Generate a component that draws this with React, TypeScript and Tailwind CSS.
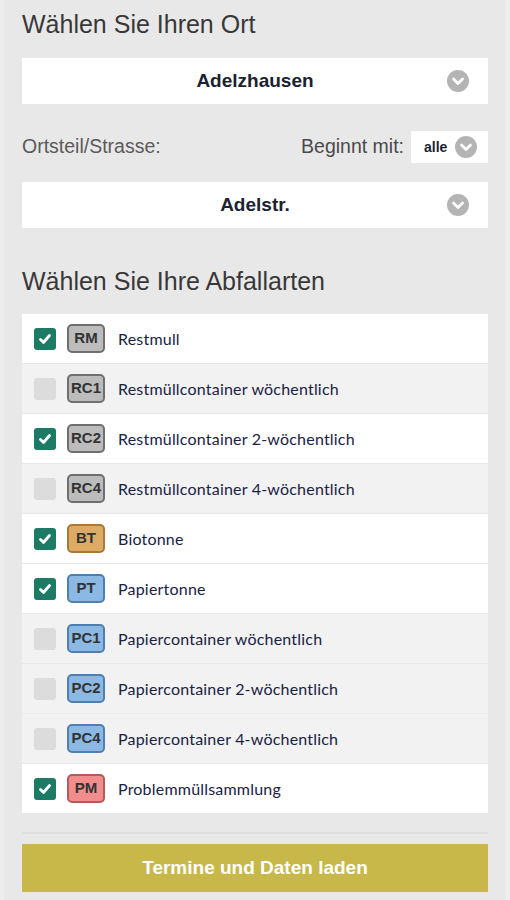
import React, { useState } from 'react';

interface Waste {
  code: string;
  label: string;
  checked: boolean;
  tone: 'gray' | 'tan' | 'blue' | 'red';
}

const initial: Waste[] = [
  { code: 'RM', label: 'Restmull', checked: true, tone: 'gray' },
  { code: 'RC1', label: 'Restmüllcontainer wöchentlich', checked: false, tone: 'gray' },
  { code: 'RC2', label: 'Restmüllcontainer 2-wöchentlich', checked: true, tone: 'gray' },
  { code: 'RC4', label: 'Restmüllcontainer 4-wöchentlich', checked: false, tone: 'gray' },
  { code: 'BT', label: 'Biotonne', checked: true, tone: 'tan' },
  { code: 'PT', label: 'Papiertonne', checked: true, tone: 'blue' },
  { code: 'PC1', label: 'Papiercontainer wöchentlich', checked: false, tone: 'blue' },
  { code: 'PC2', label: 'Papiercontainer 2-wöchentlich', checked: false, tone: 'blue' },
  { code: 'PC4', label: 'Papiercontainer 4-wöchentlich', checked: false, tone: 'blue' },
  { code: 'PM', label: 'Problemmüllsammlung', checked: true, tone: 'red' },
];

const badgeTone = {
  gray: 'bg-[#bcbcbc] border-[#6f6f6f]',
  tan: 'bg-[#dcab66] border-[#a9793a]',
  blue: 'bg-[#8cb9e4] border-[#4f7fae]',
  red: 'bg-[#f28d8d] border-[#b45a5a]',
};

const Chevron: React.FC = () => (
  <svg width="22" height="22" viewBox="0 0 22 22">
    <circle cx="11" cy="11" r="11" fill="#b4b4b4" />
    <path d="M6.5 9l4.5 4.5L15.5 9" fill="none" stroke="#fff" strokeWidth={2.8} strokeLinecap="round" strokeLinejoin="round" />
  </svg>
);

const App: React.FC = () => {
  const [items, setItems] = useState<Waste[]>(initial);

  const toggle = (code: string) =>
    setItems(items.map(i => (i.code === code ? { ...i, checked: !i.checked } : i)));

  return (
    <div className="min-h-[900px] bg-[#efeeef] font-['Liberation_Sans',Arial,sans-serif]">
      <div className="ml-[4px] w-[502px] min-h-[900px] bg-[#e9e8e9] px-[18px] pt-[9px]">
        <h1 className="text-[25px] leading-[30px] text-[#383838]">Wählen Sie Ihren Ort</h1>

        <button className="mt-[19px] w-full h-[46px] bg-white flex items-center relative">
          <span className="flex-1 text-center text-[19px] font-bold text-[#1b2230]">Adelzhausen</span>
          <span className="absolute right-[19px] top-[12px]"><Chevron /></span>
        </button>

        <div className="mt-[27px] flex items-center h-[32px]">
          <span className="text-[19.5px] text-[#5a5a5a]">Ortsteil/Strasse:</span>
          <span className="ml-auto text-[19.5px] text-[#4a4a4a]">Beginnt mit:</span>
          <div className="ml-[7px] w-[77px] h-[32px] bg-white flex items-center pl-[13px] gap-[8px]">
            <span className="text-[14px] font-bold text-[#1b2230]">alle</span>
            <Chevron />
          </div>
        </div>

        <button className="mt-[19px] w-full h-[46px] bg-white flex items-center relative">
          <span className="flex-1 text-center text-[19px] font-bold text-[#1b2230]">Adelstr.</span>
          <span className="absolute right-[19px] top-[12px]"><Chevron /></span>
        </button>

        <h2 className="mt-[38px] text-[25px] leading-[30px] text-[#383838]">Wählen Sie Ihre Abfallarten</h2>

        <ul className="mt-[18px]">
          {items.map(item => (
            <li
              key={item.code}
              onClick={() => toggle(item.code)}
              className={`h-[50px] border-b border-[#e9e8e9] flex items-center pl-[12px] cursor-pointer ${
                item.checked ? 'bg-white' : 'bg-[#f2f2f2]'
              }`}
            >
              <span
                className={`w-[22px] h-[22px] rounded-[3px] flex items-center justify-center ${
                  item.checked ? 'bg-[#1d7a64]' : 'bg-[#dcdcdc]'
                }`}
              >
                {item.checked && (
                  <svg width="14" height="14" viewBox="0 0 14 14">
                    <path d="M2.5 7.5l3 3 6-7" fill="none" stroke="#fff" strokeWidth={2.8} strokeLinecap="round" strokeLinejoin="round" />
                  </svg>
                )}
              </span>
              <span
                className={`ml-[11px] w-[38px] h-[29px] rounded-[5px] border-2 flex items-center justify-center text-[15px] font-bold text-[#333] ${badgeTone[item.tone]}`}
              >
                {item.code}
              </span>
              <span className="ml-[13px] font-['Lato',sans-serif] text-[16px] tracking-[0.2px] text-[#1a2244]">{item.label}</span>
            </li>
          ))}
        </ul>

        <div className="mt-[18px] h-[2px] bg-[#dfdedf]" />

        <button className="mt-[10px] w-full h-[48px] bg-[#c8b84a] text-white text-[19px] font-bold">
          Termine und Daten laden
        </button>
      </div>
    </div>
  );
};

export default App;
